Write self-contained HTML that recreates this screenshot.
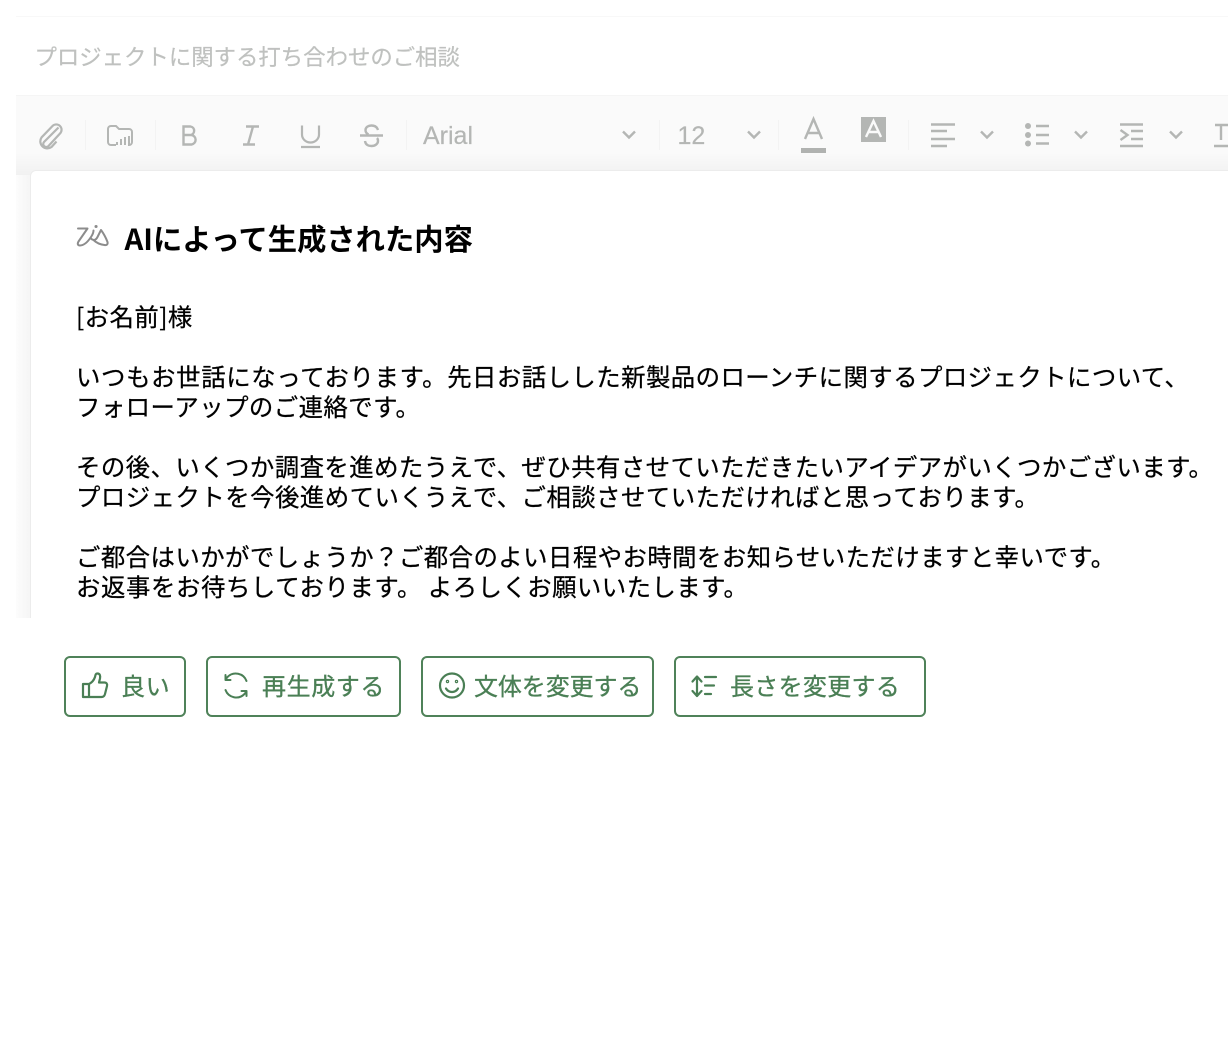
<!DOCTYPE html>
<html lang="ja"><head><meta charset="utf-8">
<style>
html,body{margin:0;padding:0;background:#fff}
body{width:1228px;height:1060px;position:relative;overflow:hidden;font-family:"Liberation Sans","Noto Sans CJK JP",sans-serif}
.a{position:absolute;white-space:nowrap}
.jp{font-family:"Noto Sans CJK JP","Liberation Sans",sans-serif}
.bar{left:16px;top:95px;width:1212px;height:80px;background:linear-gradient(#fafafa 0,#fafafa 72%,#f1f1f1 100%);border-top:1px solid #f5f5f5;box-sizing:border-box}
.sep{position:absolute;top:120px;width:1px;height:30px;background:#f3f3f3}
.card{left:30px;top:170px;width:1230px;height:448px;background:#fff;border:1px solid #ececec;border-bottom:0;border-radius:6px 6px 0 0;box-sizing:border-box}
.shadow{left:16px;top:175px;width:15px;height:443px;background:linear-gradient(90deg,#fcfcfc,#f5f5f5)}
.body{left:76px;top:302px;font-size:24.400px;line-height:30px;letter-spacing:.45px;-webkit-text-stroke:.25px #000;color:#000;white-space:pre}
.btn{position:absolute;top:656px;height:60.500px;box-sizing:border-box;border:2px solid #4f8259;border-radius:6px;background:#fff}
.t{position:absolute;top:667px;font-size:24px;line-height:36px;letter-spacing:.6px;-webkit-text-stroke:.3px #4a7f55;color:#4a7f55;white-space:nowrap}
svg{position:absolute;overflow:visible}
.tb path,.tb line,.tb circle{stroke:#b4b6b4;fill:none;stroke-width:2.400}
.gt{font-size:25px;line-height:36px;color:#b4b6b4;-webkit-text-stroke:.2px #b4b6b4;top:118px}
</style></head><body>
<div class="a" style="left:16px;top:16px;width:1212px;height:1px;background:#f8f8f8"></div>
<div class="a jp" style="left:34.500px;top:39px;font-size:22.400px;line-height:34px;-webkit-text-stroke:.2px #bfc1bf;color:#bfc1bf">プロジェクトに関する打ち合わせのご相談</div>
<div class="a bar"></div>
<div class="sep" style="left:85px"></div><div class="sep" style="left:155px"></div><div class="sep" style="left:406px"></div><div class="sep" style="left:659px"></div><div class="sep" style="left:778px"></div><div class="sep" style="left:908px"></div>
<div class="a gt" style="left:423px">Arial</div>
<div class="a gt" style="left:677.500px">12</div>
<svg class="tb" style="left:0;top:0" width="1228" height="170" viewBox="0 0 1228 170">
<path d="M58.500 127.500L44 142a3 3 0 0 0 4.500 4L60 133.500a5.200 5.200 0 0 0-7.500-7.500L41.500 137.500a7 7 0 0 0 10 9.500L56.500 141.500" style="stroke-width:2.200"/>
<path d="M116 145H111a3 3 0 0 1-3-3V129a3 3 0 0 1 3-3h5l3 3h10a3 3 0 0 1 3 3v10a3 3 0 0 1-3 3h-1" style="stroke-width:2"/>
<path d="M117 145v-3M121 145v-6M125 145v-8M129 145v-9" style="stroke-width:2"/>
<path d="M183 126.500h7a4.300 4.300 0 0 1 0 8.500H183zM183 135h8a4.800 4.800 0 0 1 0 9.500H183z" transform="translate(.5,0)"/>
<path d="M246 126.500h13M243 144.500h12M253 126.500l-5 18"/>
<path d="M302 125.500v9a8.500 8 0 0 0 17 0v-9M301 147h19" style="stroke-width:2.200"/>
<path d="M360 135.500h23M378 130c-1-3-3.500-4.500-6.500-4.500s-6 1.500-6 4.500c0 2 1 3.500 3 4.500M365 141c.5 3.500 3 5 6.500 5s6.500-2 6.500-5c0-1.500-.5-2.500-1-3"/>
<path d="M623 131.500l6 6 6-6M748 131.500l6 6 6-6M981 131.500l6 6 6-6M1075 131.500l6 6 6-6M1170 131.500l6 6 6-6" style="stroke-width:2.400"/>
<path d="M805 139l8.500-20 8.500 20M808 133h11"/>
<rect x="801" y="148" width="25" height="5" fill="#b0b2b0"/>
<rect x="861" y="117" width="25" height="25" fill="#b4b6b4"/>
<path d="M866 137l7.500-16 7.500 16M868.500 132h10" style="stroke:#fafafa"/>
<path d="M931 124.500h24M931 131h16M931 139h24M931 146h16"/>
<circle cx="1028" cy="126" r="3" style="fill:#b4b6b4;stroke:none"/><circle cx="1028" cy="135" r="3" style="fill:#b4b6b4;stroke:none"/><circle cx="1028" cy="143.500" r="3" style="fill:#b4b6b4;stroke:none"/>
<path d="M1036 126h13M1036 135h13M1036 143.500h13"/>
<path d="M1120 124.500h23M1120 146h23M1131 131h12M1131 139h12M1120.500 130l7 5-7 5"/>
<path d="M1214 146h14M1221 125v15M1215 125h13"/>
</svg>
<div class="a shadow"></div>
<div class="a card"></div>
<svg style="left:0;top:0" width="120" height="260" viewBox="0 0 120 260" fill="none" stroke="#8c8c8c" stroke-width="2" stroke-linecap="round" stroke-linejoin="round">
<path d="M78 228.500h9.500l-9 13c-1.500 2.500-.5 4 1.500 4 4 0 8-4 11-8.500 2-3 2.500-5 2.500-6.500"/>
<path d="M90.500 238c2 2.500 5 3 7-1l3.500-7c3 4 5 8 6.500 12 .5 2-.5 3.500-3 3-4-.5-8-2-11-5"/>
<path d="M96 226.500h.1" stroke-width="3"/>
</svg>
<div class="a jp" style="left:124.500px;top:218px;font-size:29.300px;line-height:40px;font-weight:700;color:#000">AIによって生成された内容</div>
<div class="a body jp">[お名前]様

<span style="letter-spacing:.65px">いつもお世話になっております。</span>先日お話しした新製品のローンチに関するプロジェクトについて、
フォローアップのご連絡です。

その後、いくつか調査を進めたうえで、ぜひ共有させていただきたいアイデアがいくつかございます。
<span style="letter-spacing:.48px">プロジェクトを今後進めていくうえで、ご相談させていただければと思っております。</span>

ご都合はいかがでしょうか？ご都合のよい日程やお時間をお知らせいただけますと幸いです。
<span style="letter-spacing:.6px">お返事をお待ちしております。</span> よろしくお願いいたします。</div>
<div class="btn" style="left:64px;width:122px"></div>
<div class="btn" style="left:206px;width:195px"></div>
<div class="btn" style="left:421px;width:233px"></div>
<div class="btn" style="left:674px;width:252px"></div>
<svg style="left:0;top:0" width="760" height="720" viewBox="0 0 760 720" fill="none" stroke="#4a7f55" stroke-width="2.200" stroke-linecap="round" stroke-linejoin="round">
<path d="M83 684h6v13h-6zM89 684c3-1.500 5-4 6-7 .5-2 .5-3.500 2.500-3.500 2.500 0 3 2.500 2.500 5l-1 4h5.500c2 0 3 1.500 2.500 3.500l-2 8c-.5 2-1.500 3-3.500 3H89"/>
<path d="M246.500 681a11.500 11.500 0 0 0-19-4l-2 2.500M225.500 690a11.500 11.500 0 0 0 19 4l2-2.500M225.500 675v5h5M246.500 696v-5h-5" stroke-width="2"/>
<circle cx="452" cy="685.500" r="12"/><path d="M446 688.500c1.500 2.500 3.500 3.500 6 3.500s4.500-1 6-3.500"/><circle cx="447.500" cy="681.500" r=".6"/><circle cx="456.500" cy="681.500" r=".6"/>
<path d="M697 677v19M692.500 681.500l4.500-5 4.500 5M692.500 691l4.500 5 4.500-5M705 677h11M705 685.500h9M705 694h6"/>
</svg>
<div class="t jp" style="left:121px">良い</div>
<div class="t jp" style="left:262px">再生成する</div>
<div class="t jp" style="left:474px;letter-spacing:-.1px">文体を変更する</div>
<div class="t jp" style="left:730px;letter-spacing:.3px">長さを変更する</div>
</body></html>
